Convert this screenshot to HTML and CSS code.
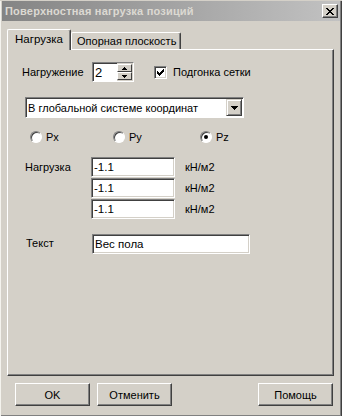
FILE: index.html
```html
<!DOCTYPE html>
<html lang="ru">
<head>
    <meta charset="UTF-8">
    <title>Поверхностная нагрузка позиций</title>
    <link rel="stylesheet" href="styles.css">
</head>
<body>
    <div class="window">
        <div class="titlebar">
            <span class="title">Поверхностная нагрузка позиций</span>
            <button class="close-btn" type="button">
                <svg width="8" height="7" viewBox="0 0 8 7">
                    <path d="M0 0h2v1h-2zM6 0h2v1h-2zM1 1h2v1h-2zM5 1h2v1h-2zM2 2h4v1h-4zM3 3h2v1h-2zM2 4h4v1h-4zM1 5h2v1h-2zM5 5h2v1h-2zM0 6h2v1h-2zM6 6h2v1h-2z" fill="#000"/>
                </svg>
            </button>
        </div>

        <div class="tabs">
            <div class="tab active">Нагрузка</div>
            <div class="tab second">Опорная плоскость</div>
        </div>

        <div class="panel">
            <div class="row-top">
                <label class="lbl-load">Нагружение</label>
                <div class="spin">
                    <span class="spin-value">2</span>
                    <div class="spin-btns">
                        <span class="spin-btn">
                            <svg width="5" height="3" viewBox="0 0 5 3"><path d="M2 0h1v1h1v1h1v1h-5v-1h1v-1h1z" fill="#000"/></svg>
                        </span>
                        <span class="spin-btn">
                            <svg width="5" height="3" viewBox="0 0 5 3"><path d="M0 0h5v1h-1v1h-1v1h-1v-1h-1v-1h-1z" fill="#000"/></svg>
                        </span>
                    </div>
                </div>
                <div class="check">
                    <span class="check-box">
                        <svg width="7" height="7" viewBox="0 0 7 7">
                            <path d="M6 0h1v1h-1zM5 1h2v1h-2zM0 2h1v1h-1zM4 2h3v1h-3zM0 3h2v1h-2zM3 3h3v1h-3zM0 4h5v1h-5zM1 5h3v1h-3zM2 6h1v1h-1z" fill="#000"/>
                        </svg>
                    </span>
                    <span>Подгонка сетки</span>
                </div>
            </div>

            <div class="combo">
                <span class="combo-text">В глобальной системе координат</span>
                <span class="combo-btn">
                    <svg width="7" height="4" viewBox="0 0 7 4"><path d="M0 0h7v1h-1v1h-1v1h-1v1h-1v-1h-1v-1h-1v-1h-1z" fill="#000"/></svg>
                </span>
            </div>

            <div class="radios">
                <div class="radio"><span class="radio-dot"></span><span>Px</span></div>
                <div class="radio"><span class="radio-dot"></span><span>Py</span></div>
                <div class="radio"><span class="radio-dot checked"></span><span>Pz</span></div>
            </div>

            <div class="loads">
                <span class="field-label">Нагрузка</span>
                <span class="edit">-1.1</span>
                <span class="unit">кН/м2</span>
                <span></span>
                <span class="edit">-1.1</span>
                <span class="unit">кН/м2</span>
                <span></span>
                <span class="edit">-1.1</span>
                <span class="unit">кН/м2</span>
            </div>

            <div class="text-row">
                <span class="field-label">Текст</span>
                <span class="edit">Вес пола</span>
            </div>
        </div>

        <div class="buttons">
            <button class="btn" type="button">OK</button>
            <button class="btn" type="button">Отменить</button>
            <button class="btn help" type="button">Помощь</button>
        </div>
    </div>
</body>
</html>
```

FILE: styles.css
```css
* {
    box-sizing: border-box;
}
body {
    margin: 0;
    background: #d4d0c8;
    font-family: 'Liberation Sans', Arial, sans-serif;
    font-size: 11px;
    color: #000;
}
.window {
    width: 342px;
    height: 416px;
    padding: 0 1px 1px;
    border: 1px solid;
    border-color: #f4f3ee #404040 #404040 #f4f3ee;
    border-top: 0;
    box-shadow: inset -1px -1px #808080;
    background: #d4d0c8;
}
.titlebar {
    display: flex;
    align-items: center;
    height: 20px;
    margin-top: 1px;
    padding: 0 2px 0 3px;
    background: linear-gradient(to right, #848484, #c2c2c2);
}
.title {
    flex: 1;
    color: #dcd9d2;
    font-weight: bold;
    font-size: 11px;
    letter-spacing: 0.2px;
}
.close-btn {
    display: flex;
    align-items: center;
    justify-content: center;
    width: 16px;
    height: 14px;
    padding: 0;
    background: #d4d0c8;
    border: 1px solid;
    border-color: #fff #404040 #404040 #fff;
    box-shadow: inset -1px -1px #808080;
}

/* tabs */
.tabs {
    display: flex;
    align-items: flex-end;
    margin-top: 8px;
    padding-left: 5px;
    position: relative;
    z-index: 1;
}
.tab {
    height: 17px;
    padding: 2px 0 0 5px;
    border: 1px solid;
    border-color: #fff #404040 transparent #fff;
    border-bottom: 0;
    border-radius: 2px 2px 0 0;
    box-shadow: inset -1px 0 #808080;
    background: #d4d0c8;
    white-space: nowrap;
}
.tab.active {
    width: 64px;
    height: 21px;
    margin-bottom: -1px;
    padding: 3px 0 0 7px;
    font-size: 11.5px;
}
.tab.second {
    width: 110px;
}

.panel {
    width: 327px;
    height: 327px;
    margin-left: 5px;
    padding: 0 0 0 2px;
    border: 1px solid;
    border-color: #fff #404040 #404040 #fff;
    box-shadow: inset -1px -1px #808080;
}

/* first row */
.row-top {
    display: flex;
    align-items: center;
    height: 20px;
    margin-top: 12px;
    padding-left: 12px;
}
.lbl-load {
    width: 70px;
}
.spin {
    display: flex;
    width: 42px;
    height: 20px;
    border: 1px solid;
    border-color: #808080 #fff #fff #808080;
    box-shadow: inset 1px 1px #404040;
    background: #fff;
}
.spin-value {
    flex: 1;
    padding: 2px 0 0 2px;
    font-size: 13px;
    line-height: 15px;
}
.spin-btns {
    display: flex;
    flex-direction: column;
    width: 16px;
    padding: 1px 1px 1px 0;
    background: #d4d0c8;
}
.spin-btn {
    display: flex;
    flex: 1;
    align-items: center;
    justify-content: center;
    border: 1px solid;
    border-color: #fff #404040 #404040 #fff;
    background: #d4d0c8;
}
.check {
    display: flex;
    align-items: center;
    gap: 6px;
    margin-left: 20px;
}
.check-box {
    display: flex;
    align-items: center;
    justify-content: center;
    width: 13px;
    height: 13px;
    border: 1px solid;
    border-color: #808080 #fff #fff #808080;
    box-shadow: inset 1px 1px #404040, inset -1px -1px #d4d0c8;
    background: #fff;
}

/* combo box */
.combo {
    display: flex;
    align-items: center;
    width: 219px;
    height: 21px;
    margin: 15px 0 0 15px;
    padding: 1px;
    border: 1px solid;
    border-color: #808080 #fff #fff #808080;
    box-shadow: inset 1px 1px #404040;
    background: #fff;
}
.combo-text {
    flex: 1;
    padding-left: 1px;
    font-size: 11px;
}
.combo-btn {
    display: flex;
    align-items: center;
    justify-content: center;
    width: 16px;
    height: 17px;
    border: 1px solid;
    border-color: #d4d0c8 #404040 #404040 #d4d0c8;
    box-shadow: inset 1px 1px #fff, inset -1px -1px #808080;
    background: #d4d0c8;
}

/* radios */
.radios {
    display: grid;
    grid-template-columns: 83px 87px auto;
    margin: 13px 0 0 20px;
}
.radio {
    display: flex;
    align-items: center;
    gap: 4px;
}
.radio-dot {
    display: flex;
    align-items: center;
    justify-content: center;
    width: 12px;
    height: 12px;
    border: 1px solid;
    border-color: #808080 #fff #fff #808080;
    border-radius: 50%;
    box-shadow: inset 1px 1px #404040;
    background: #fff;
}
.radio-dot.checked::after {
    content: "";
    width: 4px;
    height: 4px;
    border-radius: 50%;
    background: #000;
}

/* load fields */
.loads {
    display: grid;
    grid-template-columns: 66px 84px auto;
    row-gap: 1px;
    align-items: center;
    margin: 14px 0 0 15px;
}
.field-label {
    padding-bottom: 1px;
}
.edit {
    display: block;
    height: 20px;
    padding: 2px 0 0 2px;
    border: 1px solid;
    border-color: #808080 #fff #fff #808080;
    box-shadow: inset 1px 1px #404040, inset -1px -1px #d4d0c8;
    background: #fff;
    font-size: 11.5px;
    line-height: 14px;
}
.unit {
    padding-left: 10px;
}
.text-row {
    display: grid;
    grid-template-columns: 66px 158px;
    align-items: center;
    margin: 15px 0 0 16px;
}
.text-row .field-label {
    padding-bottom: 2px;
}

/* bottom buttons */
.buttons {
    display: flex;
    gap: 7px;
    margin-top: 7px;
    padding: 0 7px 0 13px;
}
.btn {
    width: 75px;
    height: 23px;
    padding: 0;
    border: 1px solid;
    border-color: #fff #404040 #404040 #fff;
    box-shadow: inset -1px -1px #808080;
    background: #d4d0c8;
    font-family: 'Liberation Sans', Arial, sans-serif;
    font-size: 11px;
    color: #000;
}
.help {
    margin-left: auto;
}
```
